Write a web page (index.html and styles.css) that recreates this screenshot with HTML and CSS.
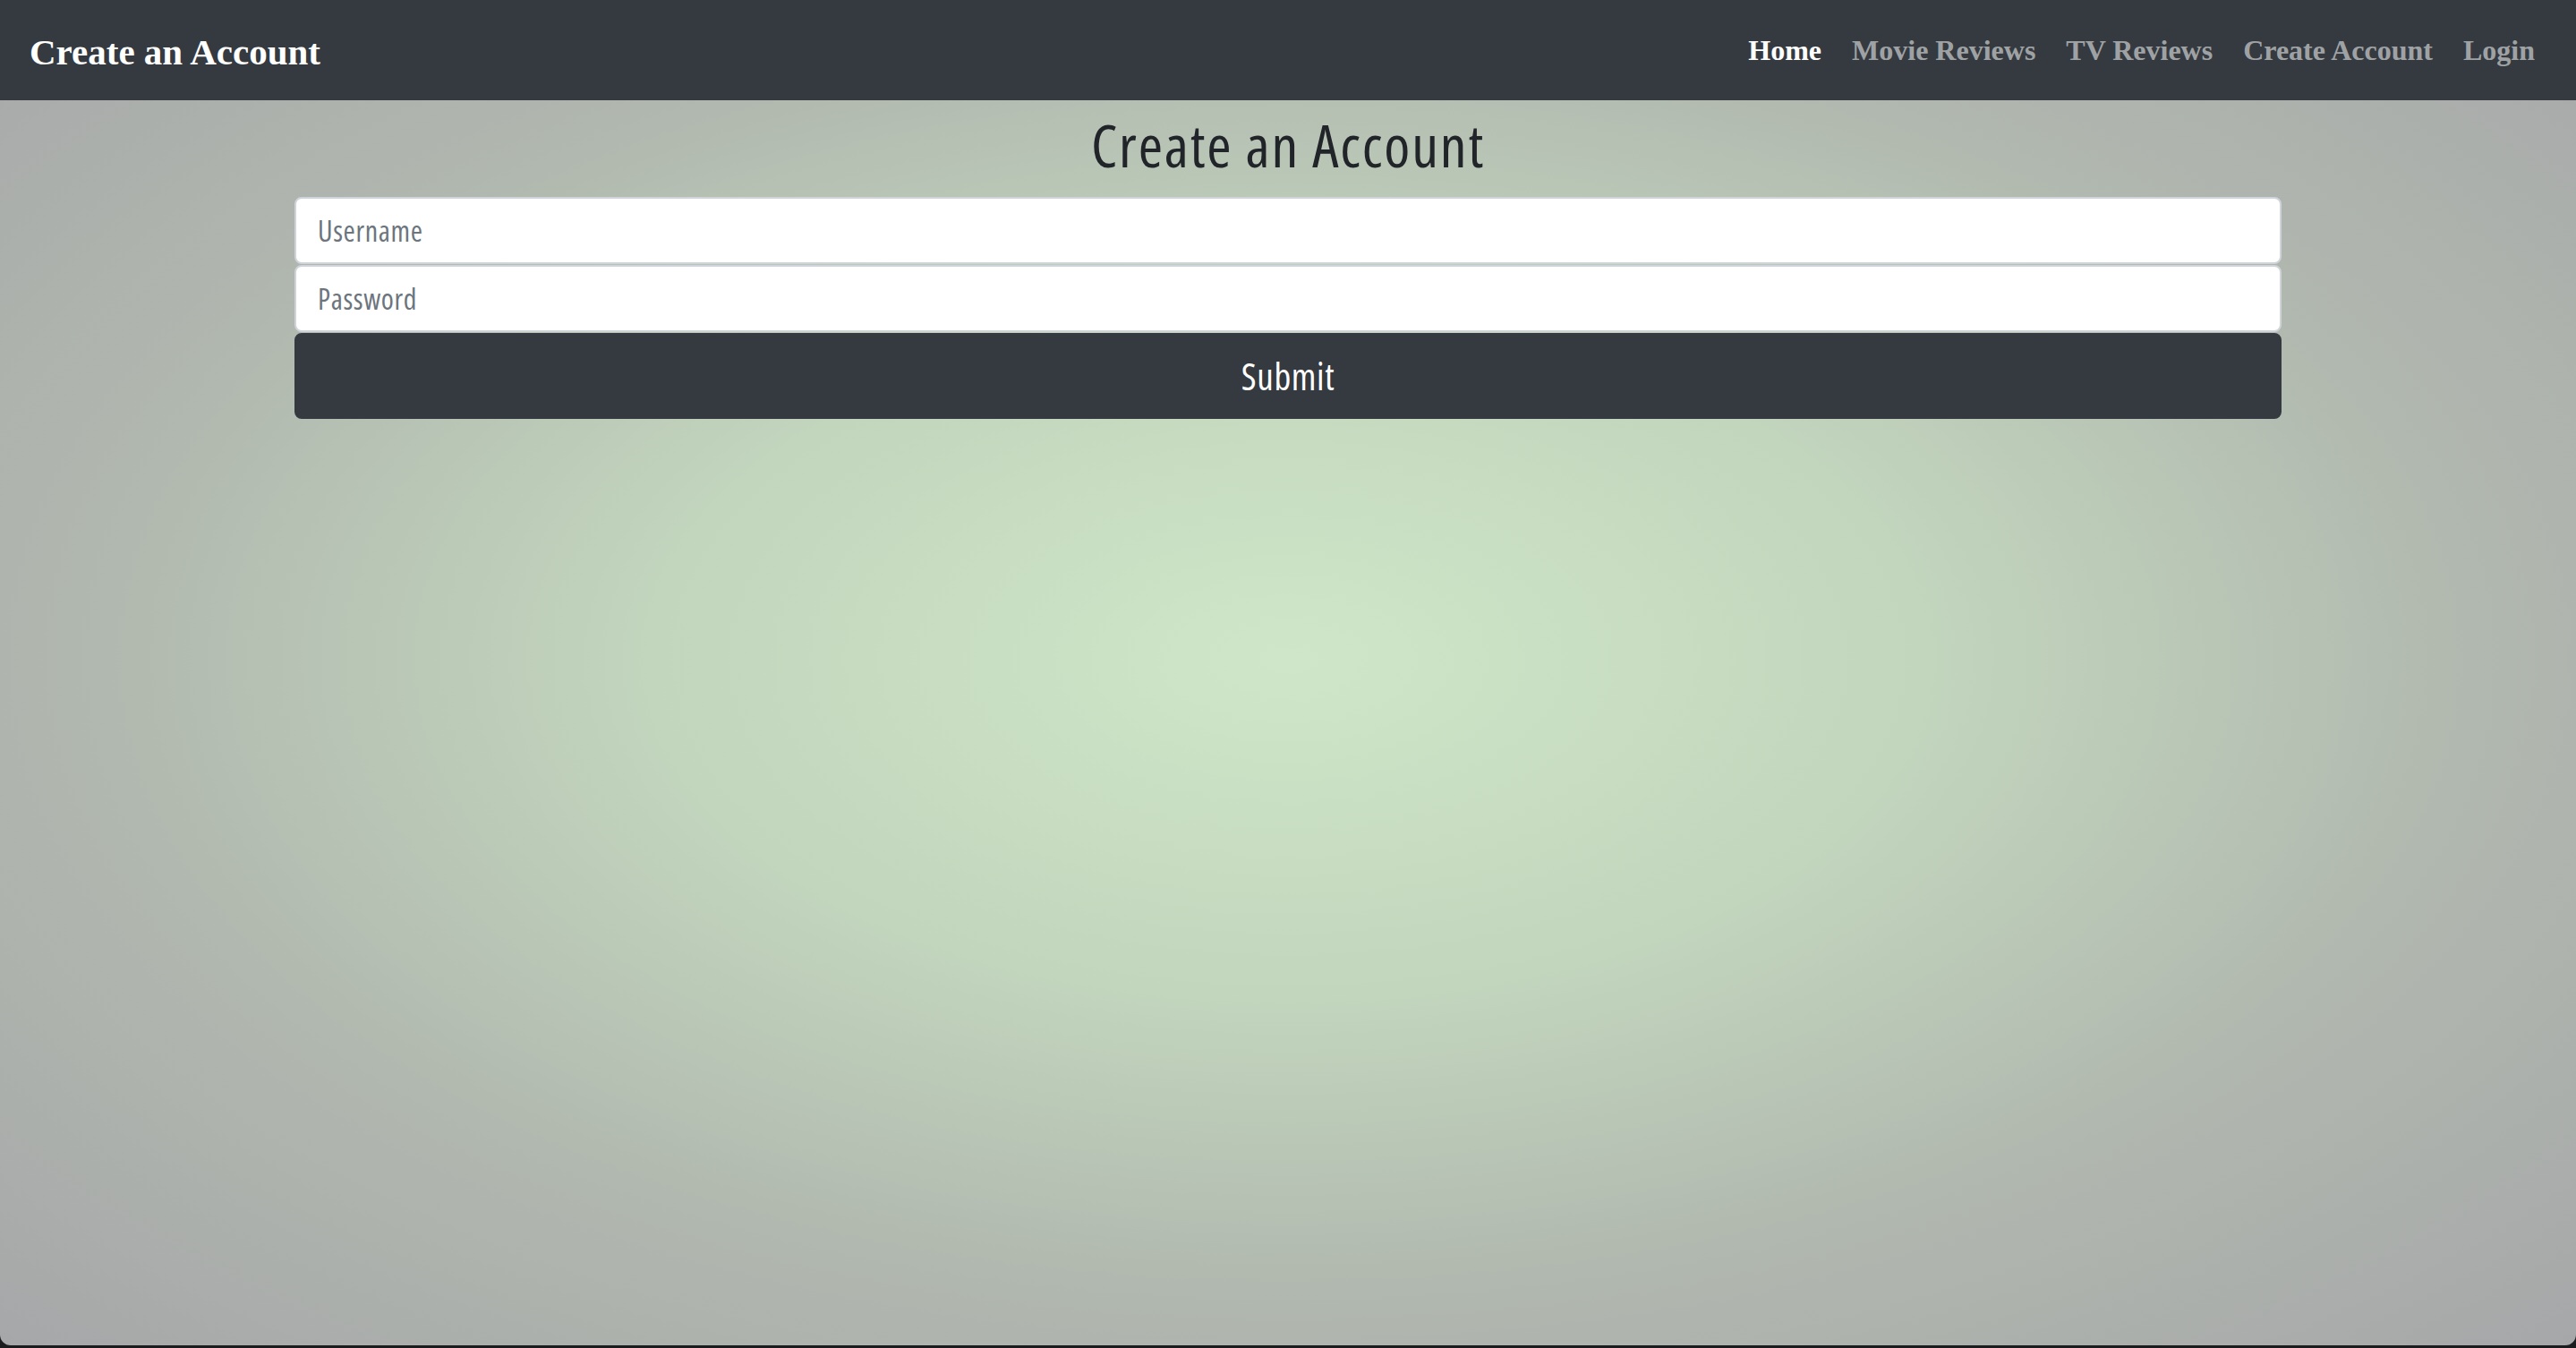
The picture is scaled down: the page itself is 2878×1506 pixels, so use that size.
FILE: index.html
```html
<!DOCTYPE html>
<html lang="en">
<head>
<meta charset="utf-8">
<title>Create an Account</title>
<link rel="stylesheet" href="styles.css">
</head>
<body>
<nav class="navbar">
  <a class="brand" href="#">Create an Account</a>
  <ul class="nav-links">
    <li><a class="nav-link active" href="#">Home</a></li>
    <li><a class="nav-link" href="#">Movie Reviews</a></li>
    <li><a class="nav-link" href="#">TV Reviews</a></li>
    <li><a class="nav-link" href="#">Create Account</a></li>
    <li><a class="nav-link" href="#">Login</a></li>
  </ul>
</nav>
<main class="content">
  <h2 class="title">Create an Account</h2>
  <form class="form">
    <input class="field" type="text" placeholder="Username">
    <input class="field" type="password" placeholder="Password">
    <button class="submit" type="button">Submit</button>
  </form>
</main>
</body>
</html>
```
FILE: styles.css
```css
html {
  background: #1b1c1e;
}
body {
  margin: 0;
  height: 1503px;
  border-radius: 0 0 12px 12px;
  background: radial-gradient(ellipse farthest-corner at 50% 49%, #cfe7c8 0%, #c2d5bd 35%, #b1b8af 65%, #a6a7a9 100%);
  font-family: "Open Sans", "Liberation Sans", Arial, sans-serif;
  font-stretch: 75%;
  letter-spacing: 0.04em;
  color: #212529;
}
.navbar {
  height: 112px;
  box-sizing: border-box;
  padding: 0 29px 0 33px;
  background: #343a40;
  display: flex;
  align-items: center;
  justify-content: space-between;
  font-family: "Liberation Serif", "Times New Roman", serif;
  font-stretch: normal;
  letter-spacing: 0;
  font-weight: bold;
}
.brand {
  color: #fff;
  text-decoration: none;
  font-size: 41px;
  padding-top: 4px;
}
.nav-links {
  list-style: none;
  margin: 0;
  padding: 0;
  display: flex;
}
.nav-link {
  display: block;
  padding: 0 17px;
  font-size: 32px;
  color: rgba(255, 255, 255, 0.55);
  text-decoration: none;
}
.nav-link.active {
  color: #fff;
}
.content {
  width: 2220px;
  margin: 0 auto;
  padding-top: 10px;
}
.title {
  margin: 0 0 20px;
  text-align: center;
  font-size: 66px;
  letter-spacing: 0.028em;
  font-weight: normal;
  line-height: 78px;
  color: #212529;
}
.form {
  display: flex;
  flex-direction: column;
  gap: 1px;
}
.field {
  display: block;
  box-sizing: border-box;
  height: 75px;
  width: 100%;
  padding: 12px 24px;
  border: 2px solid #ced4da;
  border-radius: 8px;
  background: #fff;
  font-family: inherit;
  font-stretch: inherit;
  letter-spacing: inherit;
  font-size: 32px;
  line-height: 48px;
  color: #212529;
}
.field::placeholder {
  color: #6c757d;
}
.submit {
  display: block;
  box-sizing: border-box;
  height: 96px;
  width: 100%;
  border: 2px solid #343a40;
  border-radius: 8px;
  background: #343a40;
  color: #fff;
  font-family: inherit;
  font-stretch: inherit;
  letter-spacing: inherit;
  font-size: 41px;
  line-height: 60px;
}
```
